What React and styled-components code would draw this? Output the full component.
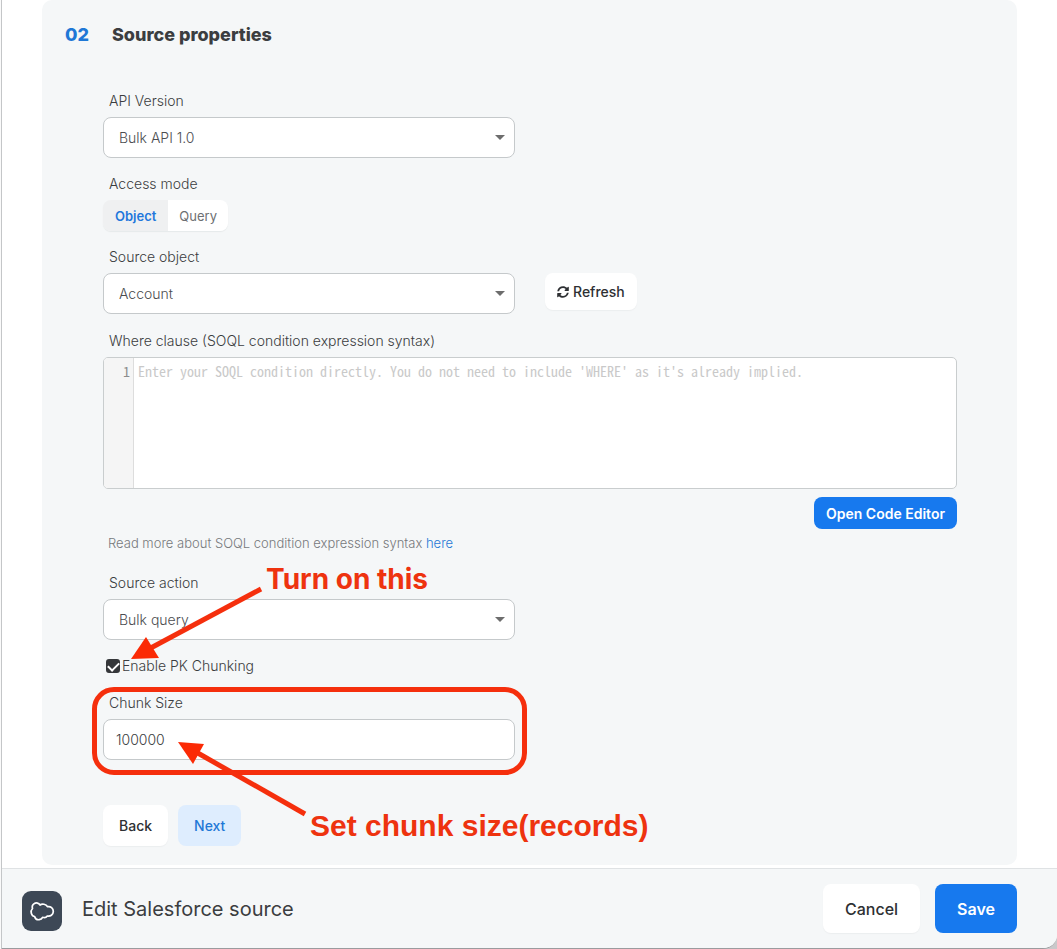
import { useState } from "react";
import { FaSyncAlt } from "react-icons/fa";
import styled, { createGlobalStyle } from "styled-components";

const GlobalStyle = createGlobalStyle`
    * {
        box-sizing: border-box;
    }
    body {
        margin: 0;
        color: #3b3d40;
        font-family: Inter, "Liberation Sans", sans-serif;
        font-size: 14px;
    }
    button,
    input,
    select,
    textarea {
        font-family: inherit;
    }
`;

const Desktop = styled.div`
    padding-bottom: 1px;
    background: #c9c8ca;
    border-left: 1px solid #fafafa;
`;

const Window = styled.div`
    display: flex;
    flex-direction: column;
    min-height: calc(100vh - 1px);
    background: #fff;
    border-left: 1px solid #c4c6c8;
    border-bottom: 1px solid #9a9b9e;
    border-bottom-right-radius: 14px;
    overflow: hidden;
`;

const Main = styled.main`
    flex: 1;
    padding: 0 40px 3px 40px;
`;

const Card = styled.section`
    padding: 0 60px 19px 61px;
    background: #f5f7f8;
    border-radius: 10px;
`;

const CardHeader = styled.header`
    display: flex;
    gap: 23px;
    margin-left: -38px;
    padding: 23px 0 44px;
    font-size: 18px;
    font-weight: 800;
    line-height: 24px;
    span {
        color: #1f78d6;
    }
    h2 {
        margin: 0;
        font-size: 18px;
        font-weight: 800;
    }
`;

const Form = styled.form`
    display: flex;
    flex-direction: column;
    gap: 16px;
`;

const Field = styled.div`
    position: relative;
    display: flex;
    flex-direction: column;
    gap: 6px;
`;

const Label = styled.label`
    align-self: flex-start;
    padding-left: 6px;
    font-weight: 300;
    line-height: 20px;
`;

const Row = styled.div`
    display: flex;
    align-items: flex-start;
    gap: 30px;
`;

const SelectBox = styled.div`
    position: relative;
    width: 100%;
    max-width: 412px;
    &::after {
        content: "";
        position: absolute;
        top: 18px;
        right: 10px;
        border: 5px solid transparent;
        border-top-color: #6d6d6d;
        border-bottom: 0;
        pointer-events: none;
    }
`;

const Select = styled.select`
    display: block;
    width: 100%;
    height: 41px;
    padding: 0 32px 0 15px;
    appearance: none;
    background: #fff;
    border: 1px solid #c5c9cb;
    border-radius: 8px;
    color: #4b4d50;
    font-size: 14px;
    font-weight: 300;
`;

const Input = styled.input`
    width: 100%;
    max-width: 412px;
    height: 41px;
    padding: 0 12px;
    background: #fff;
    border: 1px solid #c5c9cb;
    border-radius: 8px;
    color: #3b3d40;
    font-size: 14px;
    font-weight: 300;
`;

const Toggle = styled.div`
    display: flex;
    align-self: flex-start;
    overflow: hidden;
    border-radius: 8px;
    box-shadow: 0 1px 1px #e6e9ea;
`;

const ToggleButton = styled.button`
    height: 31px;
    padding: 0 12px;
    border: 0;
    background: ${({ $active }) => ($active ? "#eff0f1" : "#fff")};
    color: ${({ $active }) => ($active ? "#1f78dc" : "#6d6f72")};
    font-size: 13px;
    font-weight: ${({ $active }) => ($active ? 600 : 400)};
    cursor: pointer;
    & + & {
        padding: 0 11px;
    }
`;

const sizes = {
    small: "height: 32px; padding: 0 12px; font-size: 14px;",
    refresh: "height: 37px; padding: 0 12px; font-size: 14px;",
    medium: "height: 41px; padding: 0 16px; font-size: 14px;",
    large: "height: 49px; padding: 0 22px; font-size: 16px;",
};

const colors = {
    plain: "background: #fff; color: #2e3033; box-shadow: 0 1px 1px #eceeef;",
    soft: "background: #deedfe; color: #1f78d6;",
    primary: "background: #1779ee; color: #fff;",
};

const Button = styled.button`
    display: flex;
    align-items: center;
    gap: 4px;
    border: 0;
    border-radius: 8px;
    font-weight: ${({ $color }) => ($color === "primary" ? 600 : 500)};
    white-space: nowrap;
    cursor: pointer;
    ${({ $size }) => sizes[$size]}
    ${({ $color }) => colors[$color]}
`;

const Editor = styled.div`
    display: flex;
    height: 132px;
    overflow: hidden;
    background: #fff;
    border: 1px solid #c9cdce;
    border-radius: 5px;
    font-family: "Noto Sans Mono CJK SC", "Liberation Mono", monospace;
    font-size: 14px;
    line-height: 20px;
`;

const Gutter = styled.div`
    width: 30px;
    padding: 3px;
    background: #f5f5f5;
    border-right: 1px solid #ddd;
    color: #8c8c8c;
    text-align: right;
`;

const Code = styled.textarea`
    flex: 1;
    padding: 3px 4px;
    border: 0;
    outline: 0;
    resize: none;
    background: transparent;
    font: inherit;
    &::placeholder {
        color: #c9c9c9;
        opacity: 1;
    }
`;

const EditorField = styled(Field)`
    padding-top: 1px;
`;

const EditorActions = styled.div`
    display: flex;
    justify-content: flex-end;
    padding-top: 2px;
`;

const Help = styled.p`
    margin: -2px 0 4px;
    padding-left: 5px;
    color: #77797c;
    font-size: 13px;
    font-weight: 300;
    line-height: 20px;
    a {
        color: #1f78d6;
        text-decoration: none;
    }
`;

const CheckLabel = styled.label`
    display: flex;
    align-self: flex-start;
    align-items: center;
    gap: 2px;
    padding: 0 0 1px 3px;
    font-weight: 300;
    line-height: 20px;
    input {
        display: grid;
        place-items: center;
        width: 14px;
        height: 14px;
        margin: 0;
        appearance: none;
        border: 2px solid #35373a;
        border-radius: 3px;
    }
    input:checked {
        background: #35373a;
    }
    input:checked::before {
        content: "";
        width: 9px;
        height: 5px;
        border-left: 2px solid #fff;
        border-bottom: 2px solid #fff;
        transform: translateY(-1px) rotate(-45deg);
    }
`;

const Steps = styled.div`
    display: flex;
    gap: 10px;
    padding-top: 29px;
`;

const Highlight = styled.div`
    position: absolute;
    top: -6px;
    left: -11px;
    width: 435px;
    height: 88px;
    border: 5px solid #f52f0d;
    border-radius: 22px;
    pointer-events: none;
`;

const Arrow = styled.svg`
    position: absolute;
    top: ${({ $top }) => $top}px;
    left: ${({ $left }) => $left}px;
    overflow: visible;
    pointer-events: none;
    line {
        stroke: #f52f0d;
        stroke-width: 5;
    }
    polygon {
        fill: #fb2a05;
    }
`;

const Note = styled.strong`
    position: absolute;
    top: ${({ $top }) => $top}px;
    left: ${({ $left }) => $left}px;
    color: #ee330f;
    font-family: ${({ $font }) => $font};
    font-size: ${({ $size }) => $size}px;
    line-height: 34px;
    white-space: nowrap;
    pointer-events: none;
`;

const Footer = styled.footer`
    display: flex;
    align-items: center;
    gap: 15px;
    height: 80px;
    padding: 0 40px 0 20px;
    background: #f5f7f8;
    border-top: 1px solid #dfe2e4;
    h1 {
        flex: 1;
        margin: 0 0 0 5px;
        font-size: 20px;
        font-weight: 400;
    }
`;

const Logo = styled.div`
    display: grid;
    place-items: center;
    width: 40px;
    height: 40px;
    margin-top: 4px;
    background: #3d4856;
    border-radius: 9px;
`;

const CloudIcon = () => (
    <svg width="26" height="22" viewBox="0 0 26 22" fill="none" stroke="#fff" strokeWidth="1.7" strokeLinejoin="round" aria-hidden="true">
        <path d="M11 5C9.800 3 7.200 2.400 5.400 3.500 3.500 4.600 2.900 6.600 3.500 8.500 2.300 9.800 1.800 11.500 2.300 13.200 2.800 15 3.800 16.300 5.600 16.500 6.200 18.600 8 20 10.200 19.700 12 19.500 13 18.500 13.600 17.300 15.300 18 17.300 17.500 18.300 16 21.300 16.700 24.200 14.900 24.300 11.500 24.400 8.300 21.600 6 18.600 6.700 17 4.200 13.200 3.200 11 5Z" />
    </svg>
);

const SelectField = ({ id, label, options, children }) => (
    <Field>
        <Label htmlFor={id}>{label}</Label>
        <Row>
            <SelectBox>
                <Select id={id}>
                    {options.map((option) => (
                        <option key={option}>{option}</option>
                    ))}
                </Select>
            </SelectBox>
            {children}
        </Row>
    </Field>
);

const App = () => {
    const [mode, setMode] = useState("Object");
    const [chunking, setChunking] = useState(true);
    const [chunkSize, setChunkSize] = useState("100000");
    const [where, setWhere] = useState("");

    return (
        <Desktop>
            <GlobalStyle />
            <Window>
                <Main>
                    <Card>
                        <CardHeader>
                            <span>02</span>
                            <h2>Source properties</h2>
                        </CardHeader>
                        <Form onSubmit={(e) => e.preventDefault()}>
                            <SelectField id="api" label="API Version" options={["Bulk API 1.0", "Bulk API 2.0"]} />
                            <Field>
                                <Label as="span" id="mode">Access mode</Label>
                                <Toggle role="group" aria-labelledby="mode">
                                    {["Object", "Query"].map((name) => (
                                        <ToggleButton
                                            key={name}
                                            type="button"
                                            $active={mode === name}
                                            aria-pressed={mode === name}
                                            onClick={() => setMode(name)}
                                        >
                                            {name}
                                        </ToggleButton>
                                    ))}
                                </Toggle>
                            </Field>
                            <SelectField id="object" label="Source object" options={["Account", "Contact"]}>
                                <Button type="button" $size="refresh" $color="plain">
                                    <FaSyncAlt size={12} />
                                    Refresh
                                </Button>
                            </SelectField>
                            <EditorField>
                                <Label htmlFor="where">Where clause (SOQL condition expression syntax)</Label>
                                <Editor>
                                    <Gutter>1</Gutter>
                                    <Code
                                        id="where"
                                        value={where}
                                        onChange={(e) => setWhere(e.target.value)}
                                        placeholder="Enter your SOQL condition directly. You do not need to include 'WHERE' as it's already implied."
                                    />
                                </Editor>
                                <EditorActions>
                                    <Button type="button" $size="small" $color="primary">Open Code Editor</Button>
                                </EditorActions>
                                <Help>
                                    Read more about SOQL condition expression syntax <a href="#soql">here</a>
                                </Help>
                            </EditorField>
                            <SelectField id="action" label="Source action" options={["Bulk query", "Query"]} />
                            <Field>
                                <CheckLabel>
                                    <input
                                        type="checkbox"
                                        checked={chunking}
                                        onChange={(e) => setChunking(e.target.checked)}
                                    />
                                    Enable PK Chunking
                                </CheckLabel>
                                <Arrow $top={-68} $left={28} width="132" height="72">
                                    <line x1="130" y1="1" x2="16" y2="62" />
                                    <polygon points="0,71 15,49 28,70" />
                                </Arrow>
                                <Note $top={-94} $left={163} $size={28} $font="Inter, sans-serif">Turn on this</Note>
                            </Field>
                            <Field>
                                <Label htmlFor="size">Chunk Size</Label>
                                <Input id="size" value={chunkSize} onChange={(e) => setChunkSize(e.target.value)} />
                                <Highlight />
                                <Arrow $top={49} $left={75} width="128" height="74">
                                    <line x1="127" y1="72" x2="18" y2="10" />
                                    <polygon points="0,0 26,2 15,22" />
                                </Arrow>
                                <Note $top={116} $left={207} $size={30} $font='"Liberation Sans", Arial, sans-serif'>
                                    Set chunk size(records)
                                </Note>
                            </Field>
                            <Steps>
                                <Button type="button" $size="medium" $color="plain">Back</Button>
                                <Button type="submit" $size="medium" $color="soft">Next</Button>
                            </Steps>
                        </Form>
                    </Card>
                </Main>
                <Footer>
                    <Logo>
                        <CloudIcon />
                    </Logo>
                    <h1>Edit Salesforce source</h1>
                    <Button type="button" $size="large" $color="plain">Cancel</Button>
                    <Button type="button" $size="large" $color="primary">Save</Button>
                </Footer>
            </Window>
        </Desktop>
    );
};

export default App;
